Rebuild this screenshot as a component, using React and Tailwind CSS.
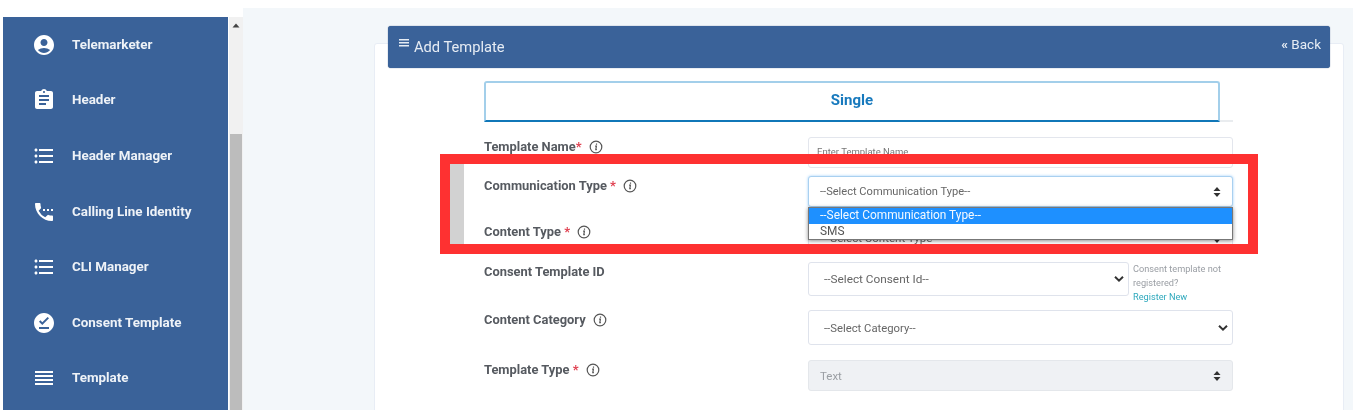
import React from "react";
import { MdAccountCircle, MdAssignment, MdFormatListBulleted, MdSettingsPhone, MdOfflinePin, MdReorder } from "react-icons/md";

const nav = [
  ["Telemarketer", MdAccountCircle],
  ["Header", MdAssignment],
  ["Header Manager", MdFormatListBulleted],
  ["Calling Line Identity", MdSettingsPhone],
  ["CLI Manager", MdFormatListBulleted],
  ["Consent Template", MdOfflinePin],
  ["Template", MdReorder],
];

const Info = () => (
  <svg width="14" height="14" viewBox="0 0 14 14" className="shrink-0 text-[#555]" fill="none">
    <circle cx="7" cy="7" r="5.8" stroke="currentColor" strokeWidth="1.2" />
    <path d="M7.5 3.6v1.2M6.1 6.2h1.3l-.6 3.4h1.1" stroke="currentColor" strokeWidth="1.2" />
  </svg>
);

const Updown = () => (
  <svg width="8" height="11" viewBox="0 0 8 11" className="absolute right-[11px] top-1/2 -translate-y-1/2 text-[#333]" fill="currentColor">
    <path d="M4 0.5 7.5 4.5H0.5ZM4 10.5 0.5 6.5H7.5Z" />
  </svg>
);

const Chevron = () => (
  <svg width="10" height="7" viewBox="0 0 10 7" className="absolute right-[4px] top-1/2 -translate-y-1/2 text-[#333]" fill="none">
    <path d="M1 1.3 5 5.2 9 1.3" stroke="currentColor" strokeWidth="2" />
  </svg>
);

function Label({ text, req, info = true, star = " *" }) {
  return (
    <div className="flex h-[18px] w-[324px] shrink-0 items-center gap-[7px] pt-[2px] text-[12.9px] font-bold leading-4 text-[#565a60]">
      <span>
        {text}
        {req && <span className="text-[#e04050]">{star}</span>}
      </span>
      {info && <Info />}
    </div>
  );
}

function Select({ text, icon, h, disabled, width = "w-[425px]", pl = "pl-[15px]", size = "text-[11.5px]", pt = "pt-[2px]", focus }) {
  return (
    <div
      className={`relative flex ${h} ${width} items-center rounded-[3px] border ${pl} ${pt} ${size} ${
        disabled
          ? "border-[#e4e7eb] bg-[#eff1f4] text-[#9a9ea3]"
          : focus
          ? "border-[#a9d0f0] bg-white text-[#666] shadow-[0_0_3px_#9fd0fa]"
          : "border-[#dfe3ec] bg-white text-[#666]"
      }`}
    >
      {text}
      {icon === "updown" ? <Updown /> : <Chevron />}
    </div>
  );
}

export default function App() {
  return (
    <div className="relative h-[410px] w-[1353px] overflow-hidden bg-white font-['Roboto',sans-serif] blur-[0.6px]">
      <div className="flex h-full items-start">
        <aside className="ml-[3px] mt-[17px] flex h-[393px] w-[240px] shrink-0">
          <nav className="w-[225px] bg-[#3a6299]">
            {nav.map(([label, Icon], i) => (
              <div key={label + i} className="flex h-[55.6px] items-center pl-[29px] text-[13.4px] font-bold text-[#eef2f7]">
                <Icon className="mr-[16px] h-[24px] w-[24px] shrink-0 text-white" />
                <span>{label}</span>
              </div>
            ))}
          </nav>
          <div className="ml-[1px] flex w-[14px] flex-col bg-[#f1f1f1] pl-[1px] pr-[1px]">
            <div className="flex h-[117px] justify-center pt-[6px]">
              <svg width="8" height="5" viewBox="0 0 8 5" fill="#444"><path d="M4 .5 7.5 4.5H.5Z" /></svg>
            </div>
            <div className="flex-1 bg-[#bcbcbc]" />
          </div>
        </aside>

        <main className="mt-[8px] h-[402px] flex-1 bg-[#f3f7fa] pl-[131px] pr-[9px] pt-[35px]">
          <section className="h-[370px] rounded-t-[3px] border border-[#e8edf5] bg-white">
            <header className="relative z-10 -mt-[18px] ml-[13px] flex h-[42px] w-[942px] items-center justify-between rounded-[3px] bg-[#3a6299] pl-[11px] pr-[9px] text-[#e6ecf4] shadow-[0_0_1px_#2a4a78]">
              <div className="flex items-center gap-[5px] text-[14.7px]">
                <svg width="10" height="8" viewBox="0 0 10 8" className="-mt-[8px]" fill="currentColor"><path d="M0 0h10v1.6H0zM0 3h10v1.6H0zM0 6h10v1.6H0z" /></svg>
                Add Template
              </div>
              <div className="-mt-[5px] text-[13.5px]"><span className="font-bold">«</span> Back</div>
            </header>

            <div className="ml-[109px] w-[749px] pt-[13px]">
              <div className="border-b-2 border-[#e9ecef]">
                <div className="-mb-[2px] flex h-[41px] w-[736px] items-center justify-center rounded-t-[3px] border-x-2 border-t-2 border-b-2 border-x-[#a3cfea] border-t-[#a3cfea] border-b-[#1077b8] text-[15px] font-bold text-[#1779bd]">
                  <span className="-mt-[2px]">Single</span>
                </div>
              </div>

              <div className="mt-[15px] flex h-[31px]">
                <Label text="Template Name" req star="*" />
                <div className="flex h-[31px] w-[425px] items-center rounded-[3px] border border-[#e3e6ed] pl-[8px] text-[9.5px] text-[#777]">
                  Enter Template Name
                </div>
              </div>

              <div className="relative mt-[8px] flex">
                <Label text="Communication Type" req />
                <Select text="--Select Communication Type--" icon="updown" h="h-[31px]" pl="pl-[11px]" size="text-[11.1px]" focus />
                <div className="absolute left-[324px] top-[31px] z-20 h-[33px] w-[425px] border border-[#777] bg-white text-[11.9px] leading-[15.5px] text-[#555] shadow-[0_1px_4px_rgba(0,0,0,.45)]">
                  <div className="bg-[#1e90ff] pl-[11px] text-[#f4f9ff]">--Select Communication Type--</div>
                  <div className="pl-[11px]">SMS</div>
                </div>
              </div>

              <div className="mt-[15px] flex">
                <Label text="Content Type" req />
                <Select text="--Select Content Type--" icon="updown" h="h-[31px]" pl="pl-[15px]" />
              </div>

              <div className="mt-[9px] flex">
                <Label text="Consent Template ID" info={false} />
                <Select text="--Select Consent Id--" h="h-[34px]" width="w-[321px]" size="text-[11.8px]" />
                <div className="ml-[4px] h-[42px] text-[9.2px] leading-[14px] text-[#9a9ea4]">
                  Consent template not
                  <br />
                  registered?
                  <br />
                  <span className="text-[#2fa9bd]">Register New</span>
                </div>
              </div>

              <div className="mt-[6px] flex">
                <Label text="Content Category" />
                <Select text="--Select Category--" h="h-[35px]" size="text-[11.3px]" pt="pt-[4px]" />
              </div>

              <div className="mt-[15px] flex">
                <Label text="Template Type" req />
                <Select text="Text" icon="updown" h="h-[31px]" pl="pl-[11px]" disabled />
              </div>
            </div>
          </section>
        </main>
      </div>

      <div className="absolute left-[440px] top-[154px] z-30 h-[100px] w-[818px] border-[10px] border-[#fe3131]">
        <div className="h-full w-[14px] bg-[#d2d2d2]" />
      </div>
    </div>
  );
}
